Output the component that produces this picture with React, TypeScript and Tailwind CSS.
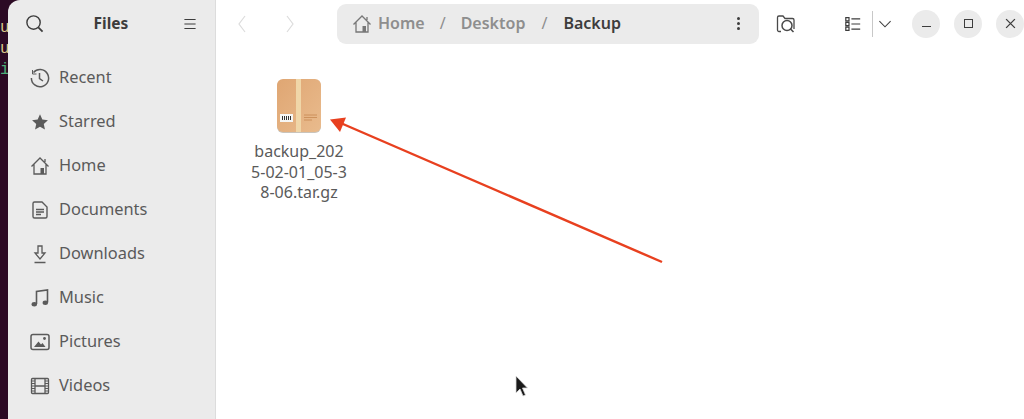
import React from 'react';

const font = 'font-["Noto_Sans",sans-serif]';

const Ico = ({ children, size = 20, className = '' }: { children: React.ReactNode; size?: number; className?: string }) => (
  <svg
    width={size}
    height={size}
    viewBox="0 0 20 20"
    fill="none"
    stroke="currentColor"
    strokeWidth="1.3"
    className={`shrink-0 ${className}`}
  >
    {children}
  </svg>
);

const HomeIcon = ({ className = '' }: { className?: string }) => (
  <Ico className={className}>
    <path d="M1.500 10.500 10 2l8.500 8.500M4 8.500V18h12V8.500M15 3v3" />
    <path d="M10.500 18v-6h3.500v6z" fill="currentColor" stroke="none" />
  </Ico>
);

const places = [
  {
    label: 'Recent',
    icon: (
      <Ico>
        <path d="M3.500 4.500A8.600 8.600 0 1 1 1.400 10" strokeWidth="1.500" />
        <path d="M2.500 2v4h4" strokeWidth="1" />
        <path d="M9.500 5v5.500l3.500 2.500" strokeWidth="1.500" />
      </Ico>
    ),
  },
  {
    label: 'Starred',
    icon: (
      <Ico size={18}>
        <path d="m10 1.500 2.600 5.800 6.200.7-4.600 4.200 1.300 6.200L10 15.200l-5.500 3.200 1.300-6.200L1.200 8l6.200-.7z" fill="currentColor" stroke="none" />
      </Ico>
    ),
  },
  { label: 'Home', icon: <HomeIcon /> },
  {
    label: 'Documents',
    icon: (
      <Ico>
        <path d="M3 3.500A1.500 1.500 0 0 1 4.500 2H12l5 5v9.500a1.500 1.500 0 0 1-1.500 1.500h-11A1.500 1.500 0 0 1 3 16.500z" strokeWidth="1.400" />
        <path d="M6 9.500h8M6 12h8M6 14.500h5" />
      </Ico>
    ),
  },
  {
    label: 'Downloads',
    icon: (
      <Ico>
        <path d="M8 2h4v7h3l-5 6-5-6h3z" />
        <path d="M4.500 18.500h11" strokeWidth="1.500" />
      </Ico>
    ),
  },
  {
    label: 'Music',
    icon: (
      <Ico>
        <path d="M6.500 16V3.500l11-1.500v12.500" strokeWidth="1.600" />
        <ellipse cx="4.300" cy="16.300" rx="2.700" ry="2.200" fill="currentColor" stroke="none" />
        <ellipse cx="15.300" cy="14.800" rx="2.700" ry="2.200" fill="currentColor" stroke="none" />
      </Ico>
    ),
  },
  {
    label: 'Pictures',
    icon: (
      <Ico>
        <rect x="1" y="2.500" width="18" height="15" rx="2" strokeWidth="1.500" />
        <path d="m4 15 4.500-5.500 2.500 3 1.500-1.500 3 4z" fill="currentColor" stroke="none" />
        <circle cx="14.500" cy="6.500" r="1.400" fill="currentColor" stroke="none" />
      </Ico>
    ),
  },
  {
    label: 'Videos',
    icon: (
      <Ico>
        <rect x="1.500" y="2.500" width="17" height="15" rx="1" strokeWidth="1.300" />
        <path d="M5 2.500v15M15 2.500v15M5 10h10" strokeWidth="1.300" />
        <path d="M1.500 5h3.500M1.500 7.500h3.500M1.500 10h3.500M1.500 12.500h3.500M1.500 15h3.500M15 5h3.500M15 7.500h3.500M15 10h3.500M15 12.500h3.500M15 15h3.500" strokeWidth="1" />
      </Ico>
    ),
  },
];

const Chevron = ({ d }: { d: string }) => (
  <svg width="8" height="18" viewBox="0 0 8 18" fill="none" stroke="#dcdcdc" strokeWidth="1.200" className="shrink-0">
    <path d={d} />
  </svg>
);

const WindowButton = ({ children }: { children: React.ReactNode }) => (
  <div className="flex h-[28px] w-[28px] items-center justify-center rounded-full bg-[#ebebeb] text-[#3d3d3d]">
    {children}
  </div>
);

const PackageIcon = () => (
  <svg width="46" height="56" viewBox="0 0 46 56">
    <defs>
      <linearGradient id="box" x1="0" y1="0" x2="1" y2="1">
        <stop offset="0" stopColor="#dfa673" />
        <stop offset="1" stopColor="#e9bb8d" />
      </linearGradient>
    </defs>
    <rect x="1" y="2" width="44" height="53" rx="6" fill="#c9c4bc" />
    <rect x="1" y="1" width="44" height="53" rx="6" fill="url(#box)" />
    <rect x="20" y="1" width="5" height="53" fill="#f0d6a8" />
    <rect x="4" y="36" width="13" height="8" fill="#f6f6f4" />
    <path d="M6.500 38v4M8.500 38v4M10.500 38v4M12.500 38v4M14.500 38v4" stroke="#333" strokeWidth="1" />
    <path d="M28 37h13M28 39.500h13M28 42h8" stroke="#c98d58" strokeWidth="0.900" />
  </svg>
);

const App = () => {
  return (
    <div className={`relative flex h-[419px] w-[1024px] overflow-hidden bg-[#2c0a24] ${font}`}>
      <div className="w-[8px] shrink-0 overflow-hidden pt-[18px] font-['Liberation_Mono',monospace] text-[16px] leading-[21px]">
        <p className="text-[#d9c98a]">u</p>
        <p className="text-[#d9c98a]">u</p>
        <p className="text-[#4caf7a]">i</p>
      </div>

      <aside className="flex w-[208px] shrink-0 flex-col rounded-tl-[12px] border-r border-[#dcdcdc] bg-[#ebebeb]">
        <div className="flex h-[47px] shrink-0 items-center justify-between pl-[17px] pr-[18px] text-[#3d3d3d]">
          <Ico size={19}>
            <circle cx="9" cy="9" r="7" strokeWidth="1.500" />
            <path d="m14 14 4.500 4.500" strokeWidth="1.800" />
          </Ico>
          <span className="mr-[5px] text-[15.500px] font-bold">Files</span>
          <Ico size={14}>
            <path d="M2 3.500h16M2 10h16M2 16.500h16" strokeWidth="1.500" />
          </Ico>
        </div>
        <nav className="flex flex-col pt-[9px]">
          {places.map((p) => (
            <div key={p.label} className="flex h-[44px] items-center gap-[10px] pl-[22px] text-[#5a5a5a]">
              <span className="flex h-[20px] w-[19px] items-center justify-center">{p.icon}</span>
              <span className="pb-[2px] text-[16.400px] leading-none">{p.label}</span>
            </div>
          ))}
        </nav>
      </aside>

      <main className="flex min-w-0 flex-1 flex-col bg-white">
        <header className="flex h-[47px] shrink-0 items-center">
          <div className="flex w-[121px] shrink-0 gap-[40px] pl-[22px]">
            <Chevron d="M7 1 1 9l6 8" />
            <Chevron d="m1 1 6 8-6 8" />
          </div>
          <div className="flex h-[40px] w-[422px] shrink-0 items-center rounded-[9px] bg-[#ebebeb] pl-[15px] pr-[19px] text-[16px] font-semibold text-[#8e8e8e]">
            <HomeIcon className="mr-[6px] text-[#777]" />
            <span className="pb-[2px]">Home</span>
            <span className="mx-[15px] pb-[2px] font-normal">/</span>
            <span className="pb-[2px]">Desktop</span>
            <span className="mx-[16px] pb-[2px] font-normal">/</span>
            <span className="pb-[2px] text-[#3d3d3d]">Backup</span>
            <span className="ml-auto flex flex-col gap-[2px]">
              <i className="h-[3px] w-[3px] rounded-full bg-[#3d3d3d]" />
              <i className="h-[3px] w-[3px] rounded-full bg-[#3d3d3d]" />
              <i className="h-[3px] w-[3px] rounded-full bg-[#3d3d3d]" />
            </span>
          </div>
          <Ico size={20} className="ml-[17px] text-[#4a4a4a]">
            <path d="M5 17.500H3A1.500 1.500 0 0 1 1.500 16V3.500A1.500 1.500 0 0 1 3 2h4l2 2.500h7.500A1.500 1.500 0 0 1 18 6v9" strokeWidth="1.300" />
            <circle cx="11" cy="11.500" r="5" strokeWidth="1.500" />
            <path d="m14.500 15 3 3" strokeWidth="1.600" />
          </Ico>
          <Ico size={16} className="ml-[49px] text-[#3d3d3d]">
            <path d="M1 2h4v4H1zM1 8h4v4H1zM1 14h4v4H1z" strokeWidth="1.500" />
            <path d="M8 3.500h11M8 10h11M8 16.500h11" strokeWidth="1.500" />
          </Ico>
          <div className="ml-[11px] h-[26px] w-px shrink-0 bg-[#c8c8c8]" />
          <Ico size={14} className="ml-[5px] text-[#3d3d3d]">
            <path d="m2 6 8 8 8-8" strokeWidth="1.500" />
          </Ico>
          <div className="ml-[20px] flex shrink-0 gap-[14px]">
            <WindowButton>
              <span className="mt-[6px] h-[1.500px] w-[9px] bg-[#3d3d3d]" />
            </WindowButton>
            <WindowButton>
              <span className="h-[9px] w-[9px] border-[1.500px] border-[#3d3d3d]" />
            </WindowButton>
            <WindowButton>
              <Ico size={11}>
                <path d="m2 2 16 16M18 2 2 18" strokeWidth="2.400" />
              </Ico>
            </WindowButton>
          </div>
        </header>

        <section className="ml-[33px] flex w-[100px] flex-col items-center pt-[31px]">
          <PackageIcon />
          <p className="mt-[7px] whitespace-nowrap text-center text-[16px] leading-[20.500px] text-[#5a5a5a]">
            <span className="block">backup_202</span>
            <span className="block">5-02-01_05-3</span>
            <span className="block">8-06.tar.gz</span>
          </p>
        </section>
      </main>

      {/* annotation arrow and mouse pointer sit on top of the window */}
      <svg className="absolute left-0 top-0" width="1024" height="419">
        <path d="M662 262 336 121" stroke="#e8401f" strokeWidth="2.400" />
        <path d="m330 119.500 16-2-6 14.500z" fill="#e8401f" />
        <path d="M516 376v17l4-4 3 7 2.500-1-3-7h5z" fill="#1a1a1a" stroke="#dcdcdc" strokeWidth="0.800" />
      </svg>
    </div>
  );
};

export default App;
